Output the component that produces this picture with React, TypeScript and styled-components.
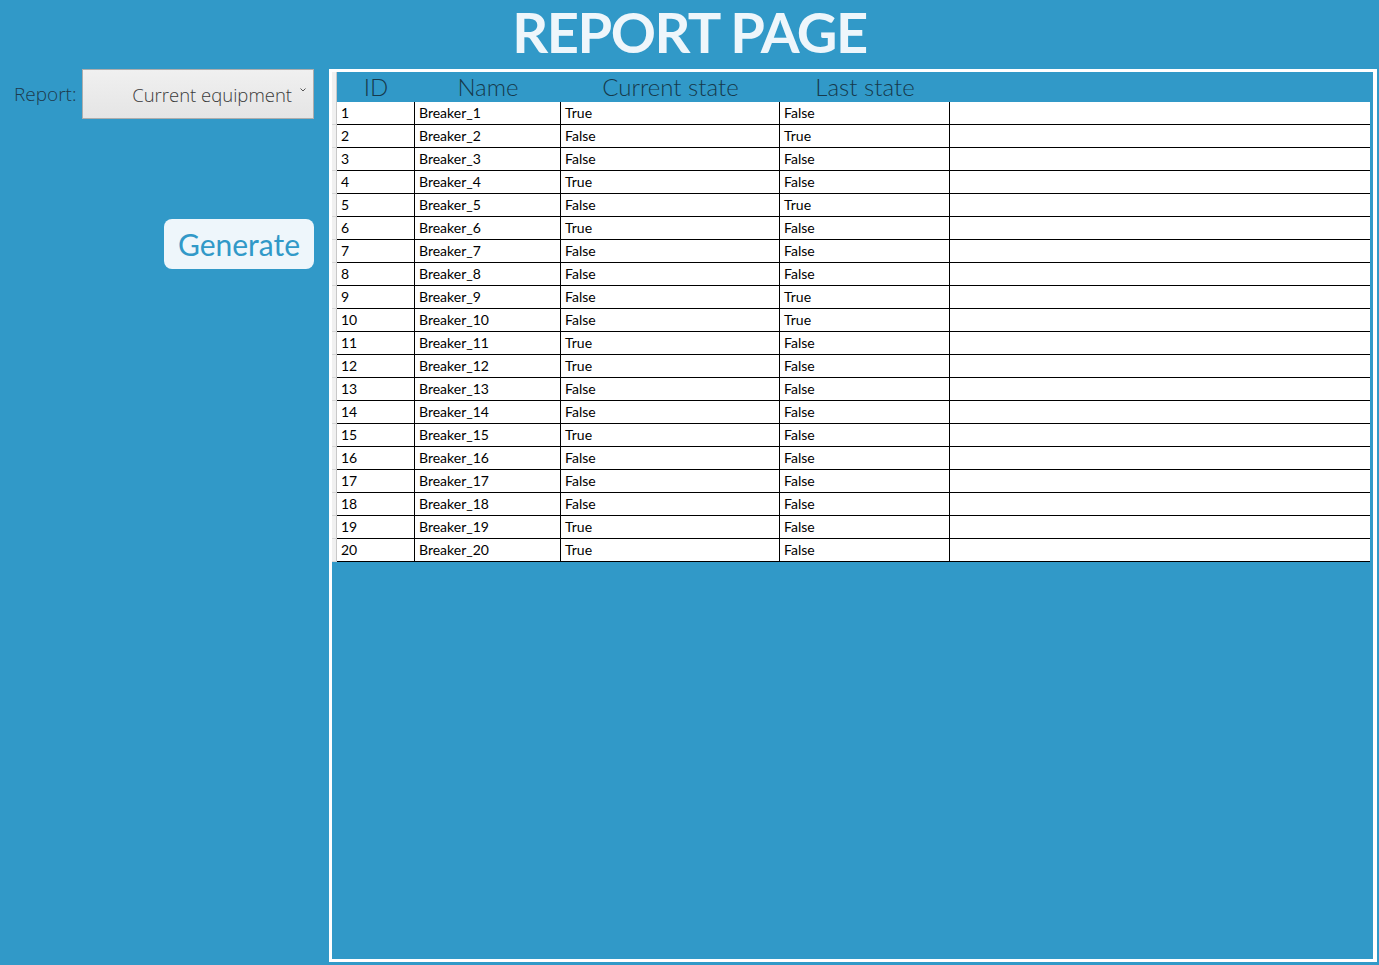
import React from 'react'
import styled, { createGlobalStyle } from 'styled-components'

const GlobalStyle = createGlobalStyle`
  html, body {
    margin: 0;
    padding: 0;
    background: #3199c8;
  }
  body {
    font-family: Lato, 'Open Sans', sans-serif;
  }
`

type Breaker = {
  id: number
  current: boolean
  last: boolean
}

const breakers: Breaker[] = [
  { id: 1, current: true, last: false },
  { id: 2, current: false, last: true },
  { id: 3, current: false, last: false },
  { id: 4, current: true, last: false },
  { id: 5, current: false, last: true },
  { id: 6, current: true, last: false },
  { id: 7, current: false, last: false },
  { id: 8, current: false, last: false },
  { id: 9, current: false, last: true },
  { id: 10, current: false, last: true },
  { id: 11, current: true, last: false },
  { id: 12, current: true, last: false },
  { id: 13, current: false, last: false },
  { id: 14, current: false, last: false },
  { id: 15, current: true, last: false },
  { id: 16, current: false, last: false },
  { id: 17, current: false, last: false },
  { id: 18, current: false, last: false },
  { id: 19, current: true, last: false },
  { id: 20, current: true, last: false },
]

const columns = '5px 78px 146px 219px 170px 1fr'

export const Page = styled.div`
  width: 1379px;
  height: 965px;
  background: #3199c8;
  display: flex;
  flex-direction: column;
  overflow: hidden;
`

export const Title = styled.h1`
  margin: 0;
  height: 69px;
  font-family: Lato, sans-serif;
  font-weight: 700;
  font-size: 56px;
  letter-spacing: -1.5px;
  line-height: 64px;
  text-align: center;
  color: #eef6fb;
`

export const Body = styled.div`
  display: flex;
  flex: 1;
`

export const Sidebar = styled.div`
  width: 329px;
  box-sizing: border-box;
  padding: 0 15px 0 14px;
  display: flex;
  flex-direction: column;
`

export const ReportRow = styled.div`
  display: flex;
  align-items: center;
  height: 50px;
  gap: 6px;
`

export const Label = styled.span`
  font-family: 'Open Sans', Lato, sans-serif;
  font-weight: 300;
  font-size: 19px;
  color: #1d3a4c;
`

export const Combo = styled.div`
  flex: 1;
  height: 50px;
  box-sizing: border-box;
  border: 1px solid #adadad;
  background: linear-gradient(#f0f0f0, #e5e5e5);
  display: flex;
  align-items: center;
  justify-content: flex-end;
  gap: 8px;
  padding-right: 7px;
  font-family: 'Open Sans', Lato, sans-serif;
  font-weight: 300;
  font-size: 18.5px;
  color: #3a3a3a;
`

export const Chevron = styled.svg`
  width: 6px;
  height: 4px;
  margin-bottom: 8px;
`

export const GenerateButton = styled.button`
  align-self: flex-end;
  margin-top: 100px;
  width: 150px;
  height: 50px;
  border: none;
  border-radius: 8px;
  background: #eef6fb;
  color: #3199c8;
  font-family: Lato, sans-serif;
  font-size: 30px;
  padding: 0;
  cursor: pointer;
`

export const Panel = styled.div`
  width: 1048px;
  height: 893px;
  box-sizing: border-box;
  border: 3px solid #ffffff;
  border-right-width: 4px;
  padding-right: 3px;
`

export const Grid = styled.div`
  display: flex;
  flex-direction: column;
`

export const HeaderRow = styled.div`
  display: grid;
  grid-template-columns: ${columns};
  height: 30px;
  background: #3199c8;
`

export const HeaderCell = styled.div`
  font-family: Lato, sans-serif;
  font-weight: 300;
  font-size: 24px;
  line-height: 30px;
  text-align: center;
  color: #163a4c;
  white-space: nowrap;
`

export const Row = styled.div`
  display: grid;
  grid-template-columns: ${columns};
  height: 23px;
  background: #ffffff;
`

export const RowHeader = styled.div`
  background: #f0f0f0;
  border-bottom: 1px solid #d6d6d6;
  border-right: 1px solid #c8c8c8;
  box-sizing: border-box;
`

export const Corner = styled(RowHeader)`
  border-bottom: none;
`

export const Cell = styled.div<{ $last?: boolean }>`
  box-sizing: border-box;
  border-bottom: 1px solid #000000;
  border-right: ${(p) => (p.$last ? 'none' : '1px solid #000000')};
  padding: 0 4px;
  font-family: Lato, sans-serif;
  font-size: 14px;
  line-height: 22px;
  color: #000000;
  white-space: nowrap;
`

const boolText = (v: boolean) => (v ? 'True' : 'False')

export default function App() {
  return (
    <Page>
      <GlobalStyle />
      <Title>REPORT PAGE</Title>
      <Body>
        <Sidebar>
          <ReportRow>
            <Label>Report:</Label>
            <Combo>
              Current equipment
              <Chevron viewBox="0 0 6 4">
                <path d="M0.5 0.5 L3 3 L5.5 0.5" fill="none" stroke="#555" strokeWidth="1" />
              </Chevron>
            </Combo>
          </ReportRow>
          <GenerateButton>Generate</GenerateButton>
        </Sidebar>
        <Panel>
          <Grid>
            <HeaderRow>
              <Corner />
              <HeaderCell>ID</HeaderCell>
              <HeaderCell>Name</HeaderCell>
              <HeaderCell>Current state</HeaderCell>
              <HeaderCell>Last state</HeaderCell>
              <HeaderCell />
            </HeaderRow>
            {breakers.map((b) => (
              <Row key={b.id}>
                <RowHeader />
                <Cell>{b.id}</Cell>
                <Cell>Breaker_{b.id}</Cell>
                <Cell>{boolText(b.current)}</Cell>
                <Cell>{boolText(b.last)}</Cell>
                <Cell $last />
              </Row>
            ))}
          </Grid>
        </Panel>
      </Body>
    </Page>
  )
}
